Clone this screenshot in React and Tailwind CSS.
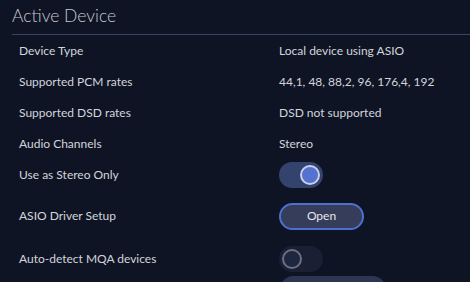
import React, { useState } from 'react';

const infoRows = [
  { label: "Device Type", value: "Local device using ASIO" },
  { label: "Supported PCM rates", value: "44,1, 48, 88,2, 96, 176,4, 192" },
  { label: "Supported DSD rates", value: "DSD not supported" },
  { label: "Audio Channels", value: "Stereo" },
];

function Toggle({ on, onClick }) {
  return (
    <button
      onClick={onClick}
      className={`w-[44px] h-[26px] rounded-full flex items-center px-[3px] ${on ? 'bg-[#34426e] justify-end' : 'bg-[#1a1f33] justify-start'}`}
    >
      <span className={`w-[20px] h-[20px] rounded-full border-2 ${on ? 'bg-[#5472d0] border-[#c8d0ea]' : 'bg-[#1f2740] border-[#6b7082]'}`} />
    </button>
  );
}

export default function App() {
  const [stereo, setStereo] = useState(true);
  const [mqa, setMqa] = useState(false);

  return (
    <div className="w-[470px] h-[282px] overflow-hidden bg-[#0f1424] text-[#d2d5dc]" style={{ fontFamily: "Lato, sans-serif" }}>
      <div className="ml-[12px] h-[35px] border-b border-[#3a4468] flex items-center">
        <h1 className="text-[17.5px] text-[#c4c8d0] font-light leading-none pb-[2px]">Active Device</h1>
      </div>

      <div className="pl-[19px] text-[12px]">
        {infoRows.map(r => (
          <div key={r.label} className="h-[31px] flex items-center">
            <span className="w-[260px]">{r.label}</span>
            <span>{r.value}</span>
          </div>
        ))}

        <div className="h-[31px] flex items-center">
          <span className="w-[260px]">Use as Stereo Only</span>
          <Toggle on={stereo} onClick={() => setStereo(!stereo)} />
        </div>

        <div className="h-[52px] flex items-center">
          <span className="w-[260px]">ASIO Driver Setup</span>
          <button className="w-[85px] h-[27px] rounded-full border-2 border-[#4d6fd2] bg-[#353d5a] text-[#e4e6ec] text-[12px]">Open</button>
        </div>

        <div className="h-[34px] flex items-center">
          <span className="w-[260px]">Auto-detect MQA devices</span>
          <Toggle on={mqa} onClick={() => setMqa(!mqa)} />
        </div>

        <div className="flex">
          <span className="w-[261px]" />
          <div className="w-[106px] h-[27px] rounded-full bg-[#2d3553]" />
        </div>
      </div>
    </div>
  );
}
